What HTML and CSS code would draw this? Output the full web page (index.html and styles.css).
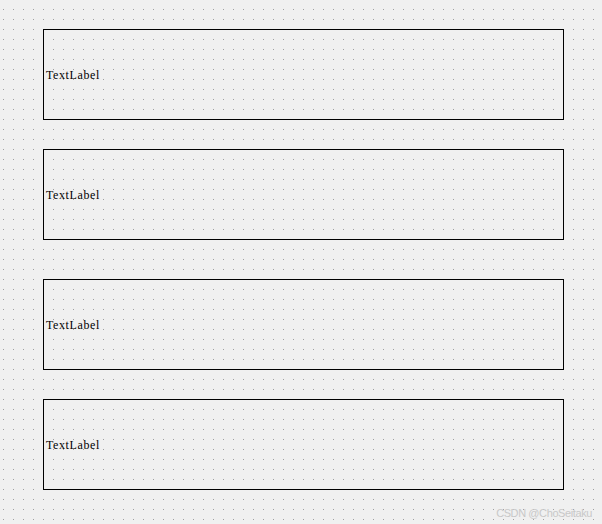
FILE: index.html
```html
<!DOCTYPE html>
<html>
<head>
<meta charset="utf-8">
<link rel="stylesheet" href="styles.css">
</head>
<body>
<div class="canvas">
  <div class="frame gap-a"><span class="label">TextLabel</span></div>
  <div class="frame gap-b"><span class="label">TextLabel</span></div>
  <div class="frame gap-a"><span class="label">TextLabel</span></div>
  <div class="frame"><span class="label">TextLabel</span></div>
</div>
<div class="watermark">CSDN @ChoSeitaku</div>
</body>
</html>
```
FILE: styles.css
```css
html, body {
  margin: 0;
  padding: 0;
}
body {
  width: 602px;
  height: 524px;
  overflow: hidden;
  position: relative;
  background-color: #f0f0f0;
  background-image: conic-gradient(at 1px 1px, transparent 270deg, #a0a0a0 0);
  background-size: 10px 10px;
  background-position: 3px 9px;
}
.canvas {
  padding: 29px 0 0 43px;
  display: flex;
  flex-direction: column;
}
.frame {
  box-sizing: border-box;
  width: 521px;
  height: 91px;
  border: 1px solid #000;
  display: flex;
  align-items: center;
  padding-left: 2px;
}
.gap-a { margin-bottom: 29px; }
.gap-b { margin-bottom: 39px; }
.label {
  font-family: "Liberation Serif", "Times New Roman", serif;
  font-size: 12px;
  letter-spacing: 0.6px;
  color: #000;
  line-height: 14px;
  margin-top: 1px;
}
.watermark {
  position: absolute;
  right: 10px;
  bottom: 5px;
  font-family: "Liberation Sans", Arial, sans-serif;
  font-size: 11px;
  letter-spacing: -0.4px;
  color: #c8c8c8;
  line-height: 12px;
}
```
